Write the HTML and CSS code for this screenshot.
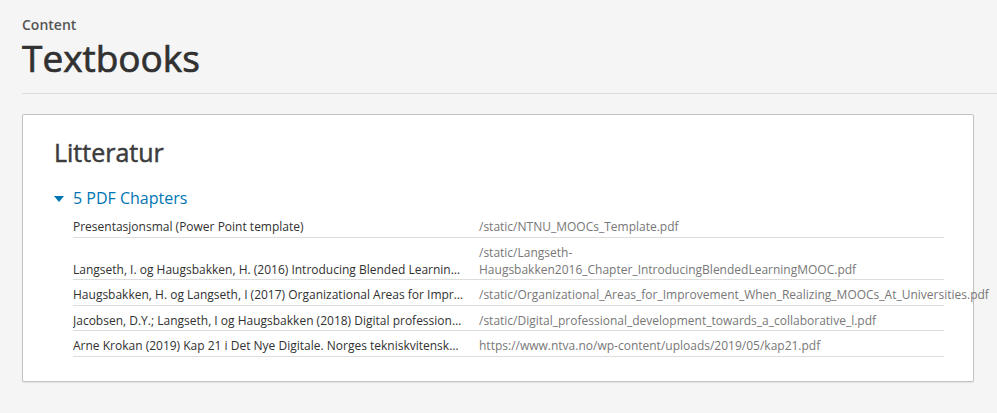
FILE: index.html
```html
<!DOCTYPE html>
<html lang="en">
<head>
<meta charset="utf-8">
<title>Textbooks</title>
<link rel="stylesheet" href="styles.css">
</head>
<body>
<header class="page-header">
  <div class="subtitle">Content</div>
  <h1 class="title">Textbooks</h1>
</header>
<main class="content">
  <section class="card">
    <h2 class="card-title">Litteratur</h2>
    <div class="chapters">
      <div class="chapters-toggle">
        <span class="caret"></span>
        <span class="toggle-label">5 PDF Chapters</span>
      </div>
      <table class="chapter-table">
        <colgroup><col class="col-name"><col class="col-url"></colgroup>
        <tbody>
          <tr><td class="name">Presentasjonsmal (Power Point template)</td><td class="url">/static/NTNU_MOOCs_Template.pdf</td></tr>
          <tr><td class="name">Langseth, I. og Haugsbakken, H. (2016) Introducing Blended Learning MOOC – A Study of One bMOOC in Norwegian Teacher Education</td><td class="url">/static/Langseth-Haugsbakken2016_Chapter_IntroducingBlendedLearningMOOC.pdf</td></tr>
          <tr><td class="name">Haugsbakken, H. og Langseth, I (2017) Organizational Areas for Improvement When Realizing MOOCs At Universities</td><td class="url">/static/Organizational_Areas_for_Improvement_When_Realizing_MOOCs_At_Universities.pdf</td></tr>
          <tr><td class="name">Jacobsen, D.Y.; Langseth, I og Haugsbakken (2018) Digital professional development towards a collaborative learning</td><td class="url">/static/Digital_professional_development_towards_a_collaborative_l.pdf</td></tr>
          <tr><td class="name">Arne Krokan (2019) Kap 21 i Det Nye Digitale. Norges tekniskvitenskapelige akademi</td><td class="url">https://www.ntva.no/wp-content/uploads/2019/05/kap21.pdf</td></tr>
        </tbody>
      </table>
    </div>
  </section>
</main>
</body>
</html>
```

FILE: styles.css
```css
html, body {
  margin: 0;
  padding: 0;
}
body {
  background: #f5f5f5;
  font-family: "Open Sans", "Liberation Sans", sans-serif;
  color: #313131;
}
.page-header {
  margin-left: 22px;
  padding-top: 15px;
  padding-bottom: 11px;
  border-bottom: 1px solid #dddddd;
}
.subtitle {
  font-size: 14px;
  font-weight: 600;
  line-height: 19px;
  color: #555555;
}
.title {
  margin: 0;
  font-size: 37px;
  font-weight: 400;
  line-height: 48px;
  color: #313131;
  -webkit-text-stroke: 0.7px #313131;
}
.content {
  padding: 20px 23px 30px 22px;
}
.card {
  background: #ffffff;
  border: 1px solid #c3c3c3;
  border-radius: 2px;
  box-shadow: 0 1px 1px rgba(0,0,0,0.08);
  padding: 20px 29px 24px 31px;
}
.card-title {
  margin: 0;
  font-size: 25px;
  font-weight: 400;
  line-height: 35px;
  color: #3c3c3c;
  -webkit-text-stroke: 0.5px #3c3c3c;
}
.chapters {
  margin-top: 17px;
}
.chapters-toggle {
  display: flex;
  align-items: center;
  gap: 9px;
  line-height: 22px;
}
.caret {
  width: 0;
  height: 0;
  border-left: 5px solid transparent;
  border-right: 5px solid transparent;
  border-top: 6px solid #0075b4;
  margin-top: 1px;
}
.toggle-label {
  font-size: 16px;
  color: #0075b4;
}
.chapter-table {
  margin-top: 3px;
  margin-left: 19px;
  width: calc(100% - 19px);
  table-layout: fixed;
  border-collapse: collapse;
  font-size: 12px;
  line-height: 17px;
}
.col-name { width: 406px; }
.chapter-table td {
  border-bottom: 1px solid #dddddd;
  padding: 6px 0 1.5px;
  vertical-align: bottom;
}
.chapter-table td.name {
  padding-right: 15px;
  white-space: nowrap;
  overflow: hidden;
  text-overflow: ellipsis;
  color: #313131;
}
.chapter-table td.url {
  color: #777777;
}
```
